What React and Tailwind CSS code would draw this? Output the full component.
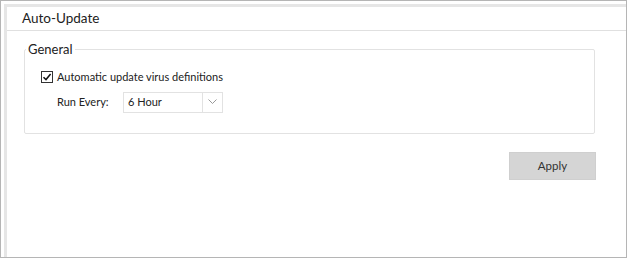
import React from "react";

export default function App() {
  return (
    <div className="w-[630px] h-[258px] bg-white font-[Lato,sans-serif]">
      <div className="w-[627px] h-[258px] border border-[#b5b5b5] pt-[3px] pl-[3px] bg-white">
        <div className="h-full border-t-[3px] border-l-[3px] border-[#e6e6e6] flex flex-col">
          <div className="h-[24px] border-b border-[#e0e0e0] flex items-center pl-[15px] text-[13.5px] text-[#222]">
            Auto-Update
          </div>
          <div className="pl-[17px] pr-[31px] pt-[10px]">
            <fieldset className="border border-[#e2e2e2] rounded-[2px] h-[93px] px-[16px] pb-0">
              <legend className="ml-[-15px] px-[2px] text-[13px] text-[#222] leading-[16px]">General</legend>
              <div className="flex items-center mt-[12px] text-[11px] text-[#222]">
                <span className="w-[12px] h-[12px] border border-[#333] bg-white flex items-center justify-center">
                  <svg width="10" height="10" viewBox="0 0 10 10">
                    <path d="M1.5 5.2 L4 7.6 L8.6 2" fill="none" stroke="#111" strokeWidth="1.5" />
                  </svg>
                </span>
                <span className="ml-[4px]">Automatic update virus definitions</span>
              </div>
              <div className="flex items-center mt-[6px] ml-[16px] text-[11px] text-[#222]">
                <span className="w-[66px]">Run Every:</span>
                <div className="w-[100px] h-[21px] border border-[#e2e2e2] bg-white flex">
                  <span className="flex-1 pl-[4px] flex items-center">6 Hour</span>
                  <span className="w-[20px] border-l border-[#e2e2e2] flex items-center justify-center">
                    <svg width="9" height="6" viewBox="0 0 9 6">
                      <path d="M0.5 0.5 L4.5 4.5 L8.5 0.5" fill="none" stroke="#999" strokeWidth="1" />
                    </svg>
                  </span>
                </div>
              </div>
            </fieldset>
          </div>
          <div className="flex justify-end pr-[30px] pt-[18px]">
            <button className="w-[87px] h-[28px] bg-[#d5d5d5] border border-[#cfcfcf] text-[11.5px] text-[#333]">
              Apply
            </button>
          </div>
        </div>
      </div>
    </div>
  );
}
